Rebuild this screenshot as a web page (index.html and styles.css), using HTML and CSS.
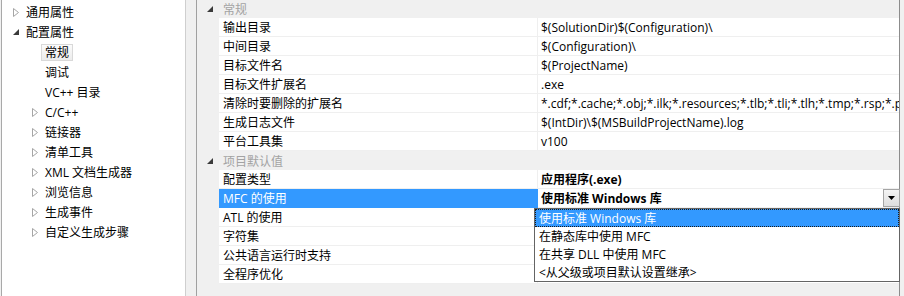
FILE: index.html
```html
<!DOCTYPE html>
<html lang="zh-CN">
<head>
<meta charset="utf-8">
<title>属性页</title>
<link rel="stylesheet" href="styles.css">
</head>
<body>
<div class="window">
  <div class="tree">
    <div class="node l0"><span class="tg"><svg width="6" height="9" viewBox="0 0 6 9"><polygon points="0.5,0.5 5.5,4.5 0.5,8.5" fill="#fff" stroke="#a6a6a6"/></svg></span><span class="lbl">通用属性</span></div>
    <div class="node l0"><span class="tg"><svg width="6" height="6" viewBox="0 0 6 6"><polygon points="6,0 6,6 0,6" fill="#3a3a3a"/></svg></span><span class="lbl">配置属性</span></div>
    <div class="node l1"><span class="tg"></span><span class="lbl sel">常规</span></div>
    <div class="node l1"><span class="tg"></span><span class="lbl">调试</span></div>
    <div class="node l1"><span class="tg"></span><span class="lbl">VC++ 目录</span></div>
    <div class="node l1"><span class="tg"><svg width="6" height="9" viewBox="0 0 6 9"><polygon points="0.5,0.5 5.5,4.5 0.5,8.5" fill="#fff" stroke="#a6a6a6"/></svg></span><span class="lbl">C/C++</span></div>
    <div class="node l1"><span class="tg"><svg width="6" height="9" viewBox="0 0 6 9"><polygon points="0.5,0.5 5.5,4.5 0.5,8.5" fill="#fff" stroke="#a6a6a6"/></svg></span><span class="lbl">链接器</span></div>
    <div class="node l1"><span class="tg"><svg width="6" height="9" viewBox="0 0 6 9"><polygon points="0.5,0.5 5.5,4.5 0.5,8.5" fill="#fff" stroke="#a6a6a6"/></svg></span><span class="lbl">清单工具</span></div>
    <div class="node l1"><span class="tg"><svg width="6" height="9" viewBox="0 0 6 9"><polygon points="0.5,0.5 5.5,4.5 0.5,8.5" fill="#fff" stroke="#a6a6a6"/></svg></span><span class="lbl">XML 文档生成器</span></div>
    <div class="node l1"><span class="tg"><svg width="6" height="9" viewBox="0 0 6 9"><polygon points="0.5,0.5 5.5,4.5 0.5,8.5" fill="#fff" stroke="#a6a6a6"/></svg></span><span class="lbl">浏览信息</span></div>
    <div class="node l1"><span class="tg"><svg width="6" height="9" viewBox="0 0 6 9"><polygon points="0.5,0.5 5.5,4.5 0.5,8.5" fill="#fff" stroke="#a6a6a6"/></svg></span><span class="lbl">生成事件</span></div>
    <div class="node l1"><span class="tg"><svg width="6" height="9" viewBox="0 0 6 9"><polygon points="0.5,0.5 5.5,4.5 0.5,8.5" fill="#fff" stroke="#a6a6a6"/></svg></span><span class="lbl">自定义生成步骤</span></div>
  </div>
  <div class="splitter"></div>
  <div class="grid">
    <div class="group first"><span class="gtg"><svg width="6" height="6" viewBox="0 0 6 6"><polygon points="6,0 6,6 0,6" fill="#3a3a3a"/></svg></span><span class="gname">常规</span></div>
    <div class="row"><div class="name">输出目录</div><div class="val">$(SolutionDir)$(Configuration)\</div></div>
    <div class="row"><div class="name">中间目录</div><div class="val">$(Configuration)\</div></div>
    <div class="row"><div class="name">目标文件名</div><div class="val">$(ProjectName)</div></div>
    <div class="row"><div class="name">目标文件扩展名</div><div class="val">.exe</div></div>
    <div class="row"><div class="name">清除时要删除的扩展名</div><div class="val">*.cdf;*.cache;*.obj;*.ilk;*.resources;*.tlb;*.tli;*.tlh;*.tmp;*.rsp;*.pgc;*.pgd;*.meta;$(TargetPath)</div></div>
    <div class="row"><div class="name">生成日志文件</div><div class="val">$(IntDir)\$(MSBuildProjectName).log</div></div>
    <div class="row"><div class="name">平台工具集</div><div class="val">v100</div></div>
    <div class="group"><span class="gtg"><svg width="6" height="6" viewBox="0 0 6 6"><polygon points="6,0 6,6 0,6" fill="#3a3a3a"/></svg></span><span class="gname">项目默认值</span></div>
    <div class="row"><div class="name">配置类型</div><div class="val bold">应用程序(.exe)</div></div>
    <div class="row active"><div class="name">MFC 的使用</div><div class="val bold combo">使用标准 Windows 库<span class="btn"><svg width="7" height="4" viewBox="0 0 7 4"><polygon points="0,0 7,0 3.5,4" fill="#000"/></svg></span>
      <div class="list">
        <div class="opt hi">使用标准 Windows 库</div>
        <div class="opt">在静态库中使用 MFC</div>
        <div class="opt">在共享 DLL 中使用 MFC</div>
        <div class="opt">&lt;从父级或项目默认设置继承&gt;</div>
      </div>
    </div></div>
    <div class="row"><div class="name">ATL 的使用</div><div class="val"></div></div>
    <div class="row"><div class="name">字符集</div><div class="val"></div></div>
    <div class="row"><div class="name">公共语言运行时支持</div><div class="val"></div></div>
    <div class="row"><div class="name">全程序优化</div><div class="val"></div></div>
  </div>
</div>
</body>
</html>
```

FILE: styles.css
```css
* { box-sizing: border-box; }

body {
  margin: 0;
  background: #f0f0f0;
  font-family: "Open Sans", "Noto Sans CJK SC", sans-serif;
  font-size: 12px;
  color: #000;
}

.window {
  display: flex;
  width: 904px;
  height: 296px;
  overflow: hidden;
}

/* left tree */
.tree {
  width: 185px;
  margin-left: 1px;
  border-left: 1px solid #a9a9a9;
  border-right: 1px solid #cfcfcf;
  background: #fff;
  padding-top: 2px;
}

.node {
  display: flex;
  align-items: center;
  height: 20px;
  white-space: nowrap;
}

.node.l0 { padding-left: 8px; }
.node.l1 { padding-left: 27px; }

.tg {
  width: 16px;
  height: 20px;
  display: flex;
  align-items: center;
  padding-left: 3px;
  flex: none;
}

.tg svg { display: block; }

.lbl {
  line-height: 16px;
  padding-top: 1px;
}

.lbl.sel {
  margin-left: -4px;
  padding: 1px 3px 0;
  line-height: 14px;
  border: 1px solid #d9d9d9;
  background: linear-gradient(#fbfbfb, #ececec);
}

.splitter {
  width: 11px;
  border-right: 1px solid #a0a0a0;
}

/* property grid */
.grid {
  width: 703px;
  border-right: 1px solid #8c8c8c;
  background: #f0f0f0;
}

.group {
  display: flex;
  align-items: center;
  height: 19px;
}

.group.first { margin-top: -1px; }

.gtg {
  width: 22px;
  display: flex;
  align-items: center;
  padding-left: 10px;
  flex: none;
}

.gtg svg { display: block; }

.gname {
  padding-left: 4px;
  padding-top: 2px;
  color: #a3a3a3;
  line-height: 16px;
}

.row {
  display: flex;
  height: 19px;
  padding-left: 22px;
}

.name {
  width: 319px;
  flex: none;
  background: #fff;
  border-bottom: 1px solid #efefef;
  border-right: 1px solid #efefef;
  padding-left: 4px;
  padding-top: 2px;
  line-height: 16px;
  white-space: nowrap;
  overflow: hidden;
}

.val {
  flex: 1;
  min-width: 0;
  background: #fff;
  border-bottom: 1px solid #efefef;
  padding-left: 3px;
  padding-top: 2px;
  line-height: 16px;
  white-space: nowrap;
  overflow: hidden;
}

.val.bold { font-weight: bold; }

.row.active .name {
  background: #3399ff;
  color: #fff;
  border-bottom-color: #3399ff;
  border-right-color: #3399ff;
}

.val.combo {
  position: relative;
  overflow: visible;
}

.btn {
  position: absolute;
  top: 0;
  right: -1px;
  width: 17px;
  height: 18px;
  border: 1px solid #a5a5a5;
  background: linear-gradient(#f4f4f4, #dedede);
  display: flex;
  align-items: center;
  justify-content: center;
}

.btn svg { display: block; }

.list {
  position: absolute;
  top: 19px;
  left: -4px;
  right: -1px;
  z-index: 2;
  background: #fff;
  border: 1px solid #646464;
  font-weight: normal;
}

.opt {
  height: 18px;
  line-height: 16px;
  padding-top: 2px;
  padding-left: 4px;
  white-space: nowrap;
}

.opt.hi {
  background: #3399ff;
  color: #fff;
  outline: 1px dotted #1a1a1a;
  outline-offset: -1px;
}
```
